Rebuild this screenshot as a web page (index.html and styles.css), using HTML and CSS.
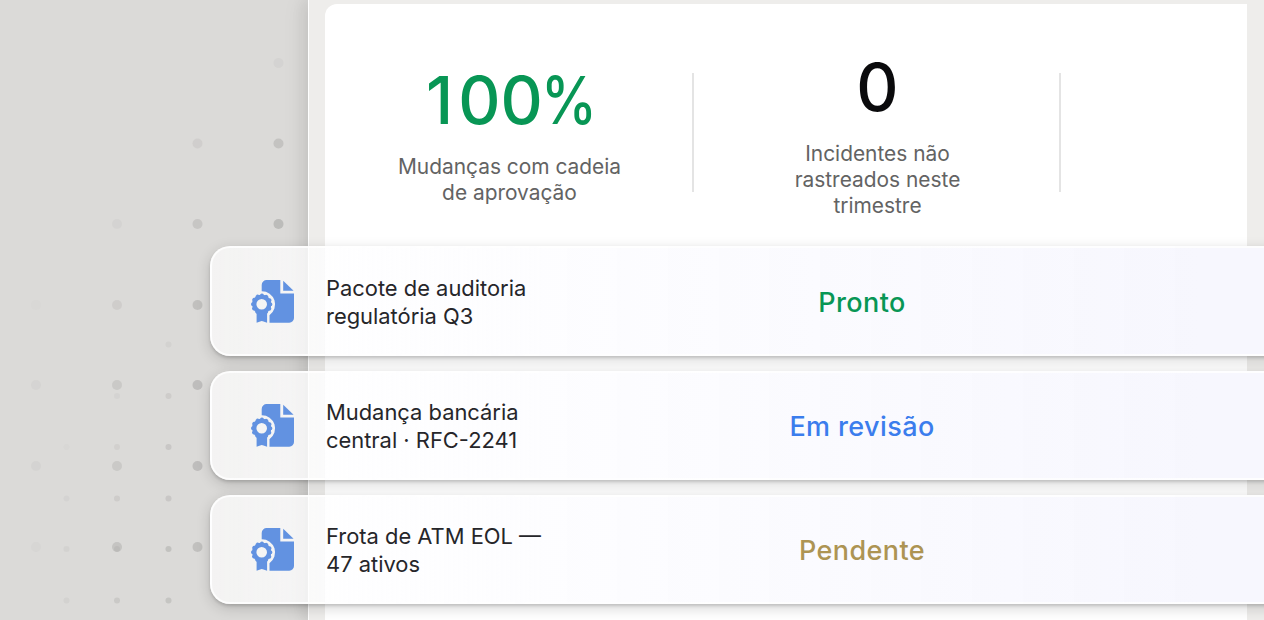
FILE: index.html
```
<!DOCTYPE html>
<html lang="pt-BR">
<head>
    <meta charset="UTF-8">
    <title>Auditoria de mudanças</title>
    <link rel="stylesheet" href="styles.css">
</head>
<body>
    <svg width="0" height="0" class="defs">
        <symbol id="certificate" viewBox="0 0 43 43">
            <path d="M15.7 0H29.3V13.5H43V38a4.7 4.7 0 0 1-4.7 4.7H18.5V35.2A13.2 13.2 0 0 0 10.7 11.2V5a5 5 0 0 1 5-5Z"/>
            <path d="M32.2.8 42.6 10.8H32.2Z"/>
            <path d="M5.6 32h10.5v10.7l-3.6-1.3q-1.7-.8-3.4 0l-3.5 1.3Z"/>
            <circle cx="10.7" cy="24.3" r="7.5" fill="none" stroke="currentColor" stroke-width="4.4"/>
            <circle cx="10.7" cy="24.3" r="8.8" fill="none" stroke="currentColor" stroke-width="3.8" stroke-linecap="round" stroke-dasharray="0.01 4.598"/>
        </symbol>
    </svg>

    <main class="stage">
        <svg class="dots" width="310" height="620" fill="#9e9d9c">
            <g>
                <circle cx="278.5" cy="63" r="5" opacity=".1"/>
                <circle cx="197.5" cy="143.5" r="5" opacity=".18"/>
                <circle cx="278.5" cy="143.5" r="5" opacity=".38"/>
                <circle cx="117" cy="224" r="5" opacity=".1"/>
                <circle cx="197.5" cy="224" r="5" opacity=".32"/>
                <circle cx="278.5" cy="224" r="5" opacity=".5"/>
                <circle cx="36" cy="305" r="5" opacity=".03"/>
                <circle cx="117" cy="305" r="5" opacity=".2"/>
                <circle cx="197.5" cy="305" r="5" opacity=".42"/>
                <circle cx="36" cy="385" r="5" opacity=".08"/>
                <circle cx="117" cy="385" r="5" opacity=".28"/>
                <circle cx="197.5" cy="385" r="5" opacity=".48"/>
                <circle cx="36" cy="466" r="5" opacity=".1"/>
                <circle cx="117" cy="466" r="5" opacity=".28"/>
                <circle cx="197.5" cy="466" r="5" opacity=".48"/>
                <circle cx="36" cy="547" r="5" opacity=".06"/>
                <circle cx="117" cy="547" r="5" opacity=".36"/>
                <circle cx="197.5" cy="547" r="5" opacity=".42"/>
            </g>
            <g>
                <circle cx="168.5" cy="344.5" r="3" opacity=".12"/>
                <circle cx="117" cy="396" r="3" opacity=".1"/>
                <circle cx="168.5" cy="396" r="3" opacity=".22"/>
                <circle cx="66.5" cy="447" r="3" opacity=".04"/>
                <circle cx="117" cy="447" r="3" opacity=".15"/>
                <circle cx="168.5" cy="447" r="3" opacity=".3"/>
                <circle cx="66.5" cy="498.5" r="3" opacity=".1"/>
                <circle cx="117" cy="498.5" r="3" opacity=".22"/>
                <circle cx="168.5" cy="498.5" r="3" opacity=".3"/>
                <circle cx="66.5" cy="549" r="3" opacity=".12"/>
                <circle cx="117" cy="549" r="3" opacity=".22"/>
                <circle cx="168.5" cy="549" r="3" opacity=".4"/>
                <circle cx="66.5" cy="600.5" r="3" opacity=".12"/>
                <circle cx="117" cy="600.5" r="3" opacity=".28"/>
                <circle cx="168.5" cy="600.5" r="3" opacity=".35"/>
            </g>
        </svg>

        <section class="panel">
            <div class="summary">
                <div class="stat">
                    <div class="stat-value green"><span class="lead">1</span>00<span class="unit">%</span></div>
                    <div class="stat-label">Mudanças com cadeia<br>de aprovação</div>
                </div>
                <div class="divider"></div>
                <div class="stat">
                    <div class="stat-value">0</div>
                    <div class="stat-label">Incidentes não<br>rastreados neste<br>trimestre</div>
                </div>
                <div class="divider"></div>
            </div>
        </section>

        <section class="records">
            <article class="record">
                <svg class="record-icon"><use href="#certificate"/></svg>
                <div class="record-name">Pacote de auditoria<br>regulatória Q3</div>
                <div class="record-status ready">Pronto</div>
            </article>
            <article class="record">
                <svg class="record-icon"><use href="#certificate"/></svg>
                <div class="record-name">Mudança bancária<br>central · RFC-2241</div>
                <div class="record-status review">Em revisão</div>
            </article>
            <article class="record">
                <svg class="record-icon"><use href="#certificate"/></svg>
                <div class="record-name">Frota de ATM EOL —<br>47 ativos</div>
                <div class="record-status pending">Pendente</div>
            </article>
        </section>
    </main>
</body>
</html>
```
FILE: styles.css
```
:root {
    --green: #089655;
    --blue: #3b7ded;
    --gold: #ad9453;
    --icon: #6292e1;
}
* {
    box-sizing: border-box;
}
body {
    margin: 0;
    font-family: Inter, "Liberation Sans", sans-serif;
    background-color: #dbdad8;
    overflow: hidden;
}
.defs {
    position: absolute;
}
.stage {
    display: grid;
    grid-template-columns: 1264px;
    grid-template-rows: 620px;
    overflow: hidden;
}
.dots,
.panel,
.records {
    grid-area: 1 / 1;
}
.panel {
    margin-left: 308px;
    padding: 4px 17px 0 16px;
    background-color: #eeedeb;
    border-left: 1px solid #fff;
    box-shadow: -3px 0 14px rgba(0,0,0,0.07), -6px 0 22px rgba(0,0,0,0.06);
}
.summary {
    display: grid;
    grid-template-columns: 367px 2px 365px 2px;
    align-items: center;
    height: 640px;
    padding-bottom: 383px;
    background-color: #fff;
    border-radius: 12px 0 0 0;
}
.stat {
    padding-top: 1px;
    text-align: center;
}
.stat-value {
    margin-bottom: 13px;
    padding: 1px 0 0 2px;
    font-size: 65.5px;
    font-weight: 500;
    line-height: 80px;
    color: #0a0a0c;
}
.stat-value.green {
    padding-left: 7px;
    color: var(--green);
}
.lead {
    letter-spacing: 5px;
}
.unit {
    display: inline-block;
    margin: 0 -8px 0 -2px;
    transform: scaleX(0.86);
    transform-origin: left;
}
.stat-label {
    padding-left: 2px;
    font-size: 20.9px;
    line-height: 26px;
    color: #636363;
}
.divider {
    width: 2px;
    height: 119px;
    background-color: #e4e4e4;
}
.records {
    display: flex;
    flex-direction: column;
    gap: 15px;
    padding: 246.4px 0 0 210px;
    z-index: 1;
}
.record {
    display: grid;
    grid-template-columns: 43px 300px 408px;
    column-gap: 32px;
    align-items: center;
    flex: none;
    width: 1100px;
    height: 109.3px;
    padding-left: 39px;
    border: 2px solid rgba(255,255,255,0.8);
    border-right: 0;
    border-radius: 20px;
    background: linear-gradient(90deg, rgba(255,255,255,0.68), rgba(253,253,255,0.95) 30%, #f7f7fe 90%);
    box-shadow: 0 2px 3px rgba(0,0,0,0.14), 0 4px 14px rgba(0,0,0,0.17);
}
.record-icon {
    width: 43px;
    height: 43px;
    color: var(--icon);
    fill: currentColor;
}
.record-name {
    padding-top: 1px;
    font-size: 21.9px;
    line-height: 28px;
    color: #26262a;
}
.record-status {
    padding-top: 2px;
    font-size: 27px;
    font-weight: 500;
    letter-spacing: 0.4px;
    text-align: center;
}
.ready {
    color: var(--green);
}
.review {
    color: var(--blue);
}
.pending {
    color: var(--gold);
}
```
